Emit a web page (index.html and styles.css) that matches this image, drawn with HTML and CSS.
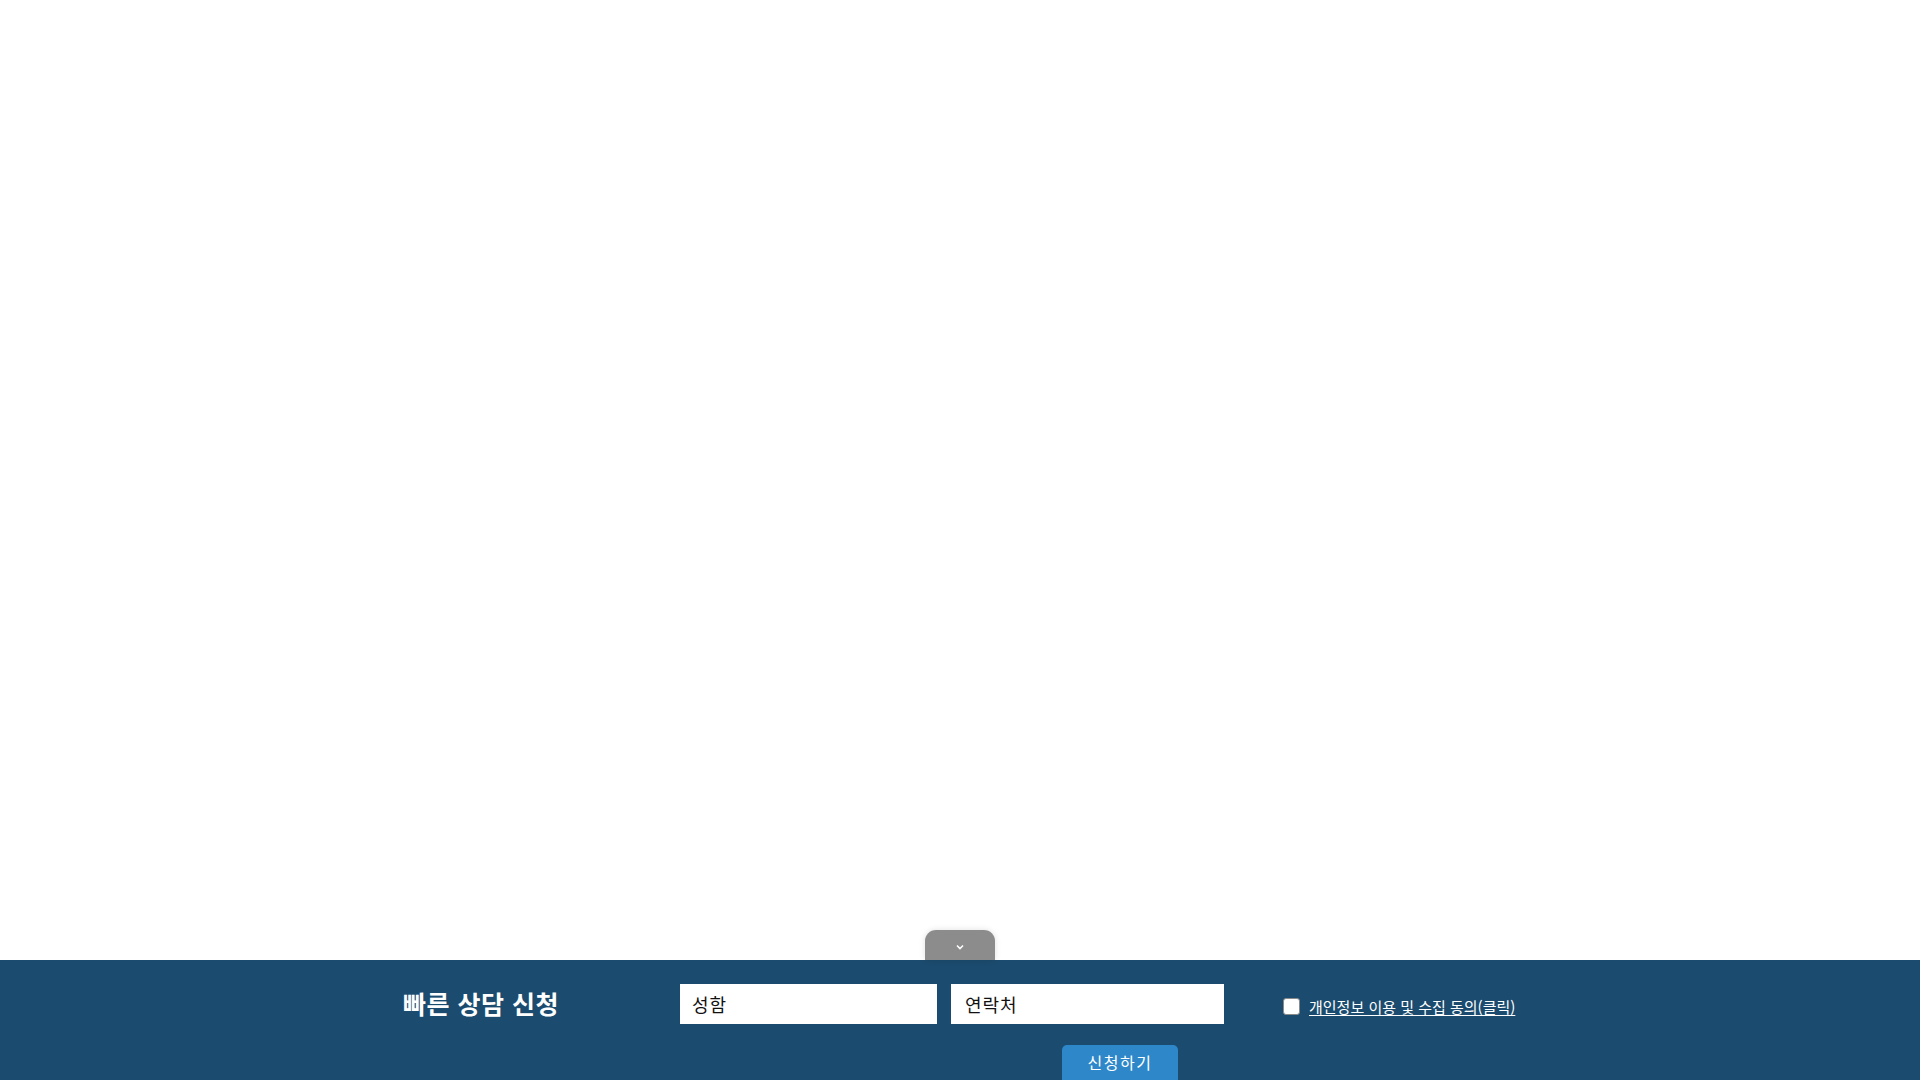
FILE: index.html
```html
<!DOCTYPE html>
<html lang="ko">
<head>
<meta charset="utf-8">
<title>빠른 상담 신청</title>
<link rel="stylesheet" href="styles.css">
</head>
<body>
<main class="page"></main>
<footer class="quick">
  <button class="quick-toggle" type="button" aria-label="접기">
    <svg width="8" height="6" viewBox="0 0 8 6"><path d="M1 1.5 L4 4.5 L7 1.5" fill="none" stroke="#ffffff" stroke-width="1.6"/></svg>
  </button>
  <div class="quick-inner">
    <h2 class="quick-title">빠른 상담 신청</h2>
    <div class="quick-form">
      <div class="quick-row">
        <input class="field field-name" type="text" placeholder="성함">
        <input class="field field-tel" type="text" placeholder="연락처">
        <label class="agree">
          <span class="agree-box"></span>
          <a class="agree-link" href="#">개인정보 이용 및 수집 동의(클릭)</a>
        </label>
      </div>
      <div class="quick-submit-row">
        <button class="quick-submit" type="button">신청하기</button>
      </div>
    </div>
  </div>
</footer>
</body>
</html>
```

FILE: styles.css
```css
html, body {
  margin: 0;
  padding: 0;
  height: 100%;
  background: #ffffff;
  font-family: "Noto Sans CJK KR", "Noto Sans", sans-serif;
}
body {
  display: flex;
  flex-direction: column;
  overflow: hidden;
}
.page {
  flex: 1;
}
.quick {
  position: relative;
  height: 120px;
  background: #1b4b6e;
  box-sizing: border-box;
  padding-top: 24px;
}
.quick-toggle {
  position: absolute;
  left: 925px;
  top: -30px;
  width: 70px;
  height: 30px;
  border: none;
  border-radius: 11px 11px 0 0;
  background: #8c8c8c;
  box-shadow: 0 0 6px rgba(0, 0, 0, 0.12);
  display: flex;
  align-items: center;
  justify-content: center;
  padding: 3px 0 0;
}
.quick-toggle svg {
  display: block;
}
.quick-inner {
  width: 1114px;
  margin: 0 auto;
  display: flex;
}
.quick-title {
  width: 277px;
  margin: 0;
  color: #ffffff;
  font-size: 25px;
  font-weight: 700;
  line-height: 38px;
  letter-spacing: 0.5px;
}
.quick-form {
  display: flex;
  flex-direction: column;
}
.quick-row {
  display: flex;
  align-items: center;
}
.field {
  height: 40px;
  box-sizing: border-box;
  border: none;
  outline: none;
  background: #ffffff;
  padding: 0 12px;
  font-family: "Noto Sans CJK KR", "Noto Sans", sans-serif;
  font-size: 18px;
  letter-spacing: 1px;
  color: #111111;
}
.field::placeholder {
  color: #111111;
  opacity: 1;
}
.field-name {
  width: 257px;
}
.field-tel {
  width: 273px;
  margin-left: 14px;
  padding-left: 14px;
}
.agree {
  display: flex;
  align-items: center;
  margin-left: 59px;
  margin-top: 5px;
}
.agree-box {
  width: 17px;
  height: 17px;
  background: #ffffff;
  border: 1px solid #8a8a8a;
  border-radius: 3px;
  box-sizing: border-box;
  margin-right: 9px;
}
.agree-link {
  color: #ffffff;
  font-size: 15px;
  text-decoration: underline;
  text-underline-offset: 2px;
}
.quick-submit-row {
  padding-left: 382px;
  margin-top: 21px;
}
.quick-submit {
  width: 116px;
  height: 40px;
  border: none;
  border-radius: 5px;
  background: #2d87c9;
  color: #ffffff;
  font-family: "Noto Sans CJK KR", "Noto Sans", sans-serif;
  font-size: 16px;
  padding: 0 0 7px;
  letter-spacing: 1.5px;
}
```
